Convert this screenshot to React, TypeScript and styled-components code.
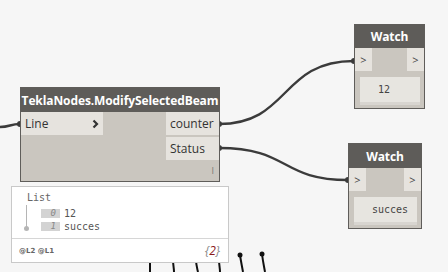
import styled, { createGlobalStyle } from "styled-components";

const GlobalStyle = createGlobalStyle`
  html, body {
    margin: 0;
    padding: 0;
    background: #f6f6f6;
  }
  body {
    font-family: "Open Sans", "Liberation Sans", sans-serif;
  }
`

interface place {
  $x: number
  $y: number
  $w: number
  $h: number
}

const Canvas = styled.div`
  position: relative;
  width: 448px;
  height: 272px;
  overflow: hidden;
  background: #f6f6f6;
`

const Wires = styled.svg`
  position: absolute;
  left: 0;
  top: 0;
  z-index: 0;
`

const Node = styled.div<place>`
  position: absolute;
  left: ${p => p.$x}px;
  top: ${p => p.$y}px;
  width: ${p => p.$w}px;
  height: ${p => p.$h}px;
  box-sizing: border-box;
  border: 1px solid #5f5d5a;
  background: #cac6bf;
  display: flex;
  flex-direction: column;
  z-index: 1;
`

const Header = styled.div<{ $h: number }>`
  height: ${p => p.$h}px;
  flex: none;
  background: #5e5c59;
  color: #fff;
  font-weight: 700;
  font-size: 12px;
  display: flex;
  align-items: center;
  justify-content: center;
  letter-spacing: -0.1px;
`

const Body = styled.div`
  flex: 1;
  display: flex;
  justify-content: space-between;
  position: relative;
`

const Column = styled.div`
  display: flex;
  flex-direction: column;
  gap: 2px;
`

const Port = styled.div<{ $w: number }>`
  width: ${p => p.$w}px;
  height: 23px;
  background: #e6e3de;
  color: #333;
  font-size: 12px;
  display: flex;
  align-items: center;
  justify-content: space-between;
  padding: 0 4px 0 4px;
  box-sizing: border-box;
`

const Lacing = styled.span`
  position: absolute;
  right: 5px;
  bottom: 4px;
  font-size: 9px;
  color: #7a7772;
`

const WatchPorts = styled.div`
  display: flex;
  justify-content: space-between;
  height: 23px;
`

const WatchPort = styled.div`
  width: 17px;
  background: #e6e3de;
  color: #444;
  font-size: 11px;
  display: flex;
  align-items: center;
  justify-content: center;
`

const Display = styled.div`
  margin: 6px 4px 0 5px;
  height: 25px;
  background: #e7e5e0;
  border-bottom: 3px solid #d8d5d0;
  box-sizing: content-box;
  font-family: "DejaVu Sans Mono", "Liberation Mono", monospace;
  font-size: 10px;
  color: #444;
  display: flex;
  align-items: center;
  padding-left: 18px;
`

const Preview = styled.div<place>`
  position: absolute;
  left: ${p => p.$x}px;
  top: ${p => p.$y}px;
  width: ${p => p.$w}px;
  height: ${p => p.$h}px;
  box-sizing: border-box;
  border: 1px solid #c9c9c9;
  background: #fff;
  display: flex;
  flex-direction: column;
  z-index: 2;
  font-family: "DejaVu Sans Mono", "Liberation Mono", monospace;
  color: #555;
`

const Tree = styled.div`
  flex: 1;
  padding: 5px 0 0 15px;
  position: relative;
`

const ListLabel = styled.div`
  font-size: 10px;
  line-height: 12px;
  color: #666;
`

const Branch = styled.div`
  position: absolute;
  left: 14px;
  top: 18px;
  width: 1px;
  height: 24px;
  background: #b5b5b5;
  &::after {
    content: "";
    position: absolute;
    left: -2px;
    bottom: -2px;
    width: 5px;
    height: 5px;
    border-radius: 50%;
    background: #b5b5b5;
  }
`

const Items = styled.div`
  display: flex;
  flex-direction: column;
  gap: 4px;
  margin: 5px 0 0 14px;
`

const Item = styled.div`
  display: flex;
  align-items: center;
  gap: 4px;
  font-size: 10px;
  height: 9px;
`

const Index = styled.span`
  width: 19px;
  height: 9px;
  background: #d3d3d3;
  color: #888;
  font-style: italic;
  font-size: 9px;
  line-height: 9px;
  text-align: right;
  padding-right: 4px;
  box-sizing: border-box;
`

const Footer = styled.div`
  height: 23px;
  border-top: 1px solid #d6d6d6;
  display: flex;
  align-items: center;
  justify-content: space-between;
  padding: 0 8px 0 7px;
`

const Levels = styled.span`
  font-family: "DejaVu Sans", sans-serif;
  font-size: 7px;
  font-weight: 700;
  color: #666;
`

const Count = styled.span`
  font-family: "Open Sans", sans-serif;
  font-style: italic;
  font-size: 12px;
  color: #888;
  b {
    font-weight: 400;
    color: #8b1a1a;
  }
`

const wire = { fill: "none", stroke: "#3b3b3b", strokeWidth: 2.4 }

const Chevron = () => (
  <svg width="7" height="10" viewBox="0 0 7 10">
    <path d="M1.5 1.5 L5 5 L1.5 8.5" fill="none" stroke="#333" strokeWidth="2.2" />
  </svg>
)

const App = () => {
  const items = ["12", "succes"]

  return (
    <Canvas>
      <GlobalStyle />
      <Wires width="448" height="272" viewBox="0 0 448 272">
        <path d="M0 127 C 10 127, 10 124, 20 124" {...wire} />
        <circle cx="20" cy="124" r="3" fill="#3b3b3b" />
        <path d="M219 124 C 290 124, 280 61, 354 61" {...wire} />
        <circle cx="219" cy="124" r="3" fill="#3b3b3b" />
        <circle cx="354" cy="61" r="3" fill="#3b3b3b" />
        <path d="M219 148 C 290 148, 280 180, 348 180" {...wire} />
        <circle cx="219" cy="148" r="3" fill="#3b3b3b" />
        <circle cx="348" cy="180" r="3" fill="#3b3b3b" />
        <g stroke="#111" strokeWidth="2" fill="none">
          <path d="M150 258 L150 272" />
          <path d="M173 258 C 173 266, 174 268, 174 272" />
          <path d="M196 258 C 196 266, 197 268, 198 272" />
          <path d="M219 258 C 219 266, 220 268, 220 272" />
          <path d="M240 255 C 241 262, 242 266, 243 272" />
          <path d="M262 254 C 263 262, 264 266, 265 272" />
        </g>
        <circle cx="240" cy="255" r="2.5" fill="#111" />
        <circle cx="262" cy="254" r="2.5" fill="#111" />
      </Wires>

      <Node $x={20} $y={87} $w={200} $h={95}>
        <Header $h={24}>TeklaNodes.ModifySelectedBeam</Header>
        <Body>
          <Column>
            <Port $w={82}>Line<Chevron /></Port>
          </Column>
          <Column>
            <Port $w={53}>counter</Port>
            <Port $w={53}>Status</Port>
          </Column>
          <Lacing>I</Lacing>
        </Body>
      </Node>

      <Node $x={354} $y={24} $w={71} $h={85}>
        <Header $h={23}>Watch</Header>
        <WatchPorts>
          <WatchPort>&gt;</WatchPort>
          <WatchPort>&gt;</WatchPort>
        </WatchPorts>
        <Display>12</Display>
      </Node>

      <Node $x={348} $y={143} $w={74} $h={86}>
        <Header $h={24}>Watch</Header>
        <WatchPorts>
          <WatchPort>&gt;</WatchPort>
          <WatchPort>&gt;</WatchPort>
        </WatchPorts>
        <Display>succes</Display>
      </Node>

      <Preview $x={11} $y={186} $w={218} $h={77}>
        <Tree>
          <ListLabel>List</ListLabel>
          <Branch />
          <Items>
            {items.map((v, i) => (
              <Item key={i}>
                <Index>{i}</Index>
                <span>{v}</span>
              </Item>
            ))}
          </Items>
        </Tree>
        <Footer>
          <Levels>@L2 @L1</Levels>
          <Count>{"{"}<b>2</b>{"}"}</Count>
        </Footer>
      </Preview>
    </Canvas>
  )
}

export default App
